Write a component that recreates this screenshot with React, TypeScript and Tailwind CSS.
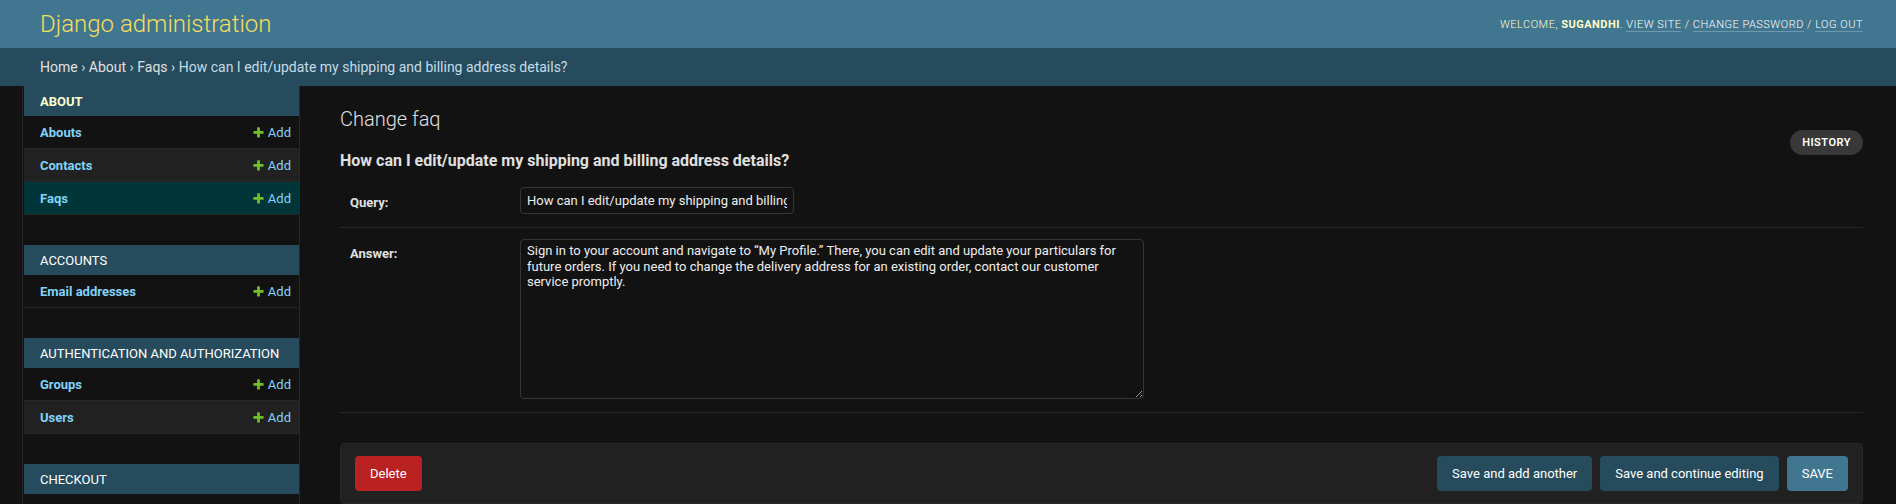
import React from 'react';

const AddIcon = () => (
  <svg width="13" height="13" viewBox="0 0 1792 1792" className="shrink-0">
    <path
      fill="#70bf2b"
      d="M1600 796v192q0 40-28 68t-68 28h-416v416q0 40-28 68t-68 28h-192q-40 0-68-28t-28-68v-416h-416q-40 0-68-28t-28-68v-192q0-40 28-68t68-28h416v-416q0-40 28-68t68-28h192q40 0 68 28t28 68v416h416q40 0 68 28t28 68z"
    />
  </svg>
);

interface ModelRow {
  name: string;
  bg: string;
}

interface AppModule {
  title: string;
  current?: boolean;
  rows: ModelRow[];
}

const modules: AppModule[] = [
  {
    title: 'About',
    current: true,
    rows: [
      { name: 'Abouts', bg: 'bg-[#121212]' },
      { name: 'Contacts', bg: 'bg-[#212121]' },
      { name: 'Faqs', bg: 'bg-[#00363a]' },
    ],
  },
  { title: 'Accounts', rows: [{ name: 'Email addresses', bg: 'bg-[#121212]' }] },
  {
    title: 'Authentication and Authorization',
    rows: [
      { name: 'Groups', bg: 'bg-[#121212]' },
      { name: 'Users', bg: 'bg-[#212121]' },
    ],
  },
  // rows below the fold are not visible
  { title: 'Checkout', rows: [] },
];

const answer =
  'Sign in to your account and navigate to \u201cMy Profile.\u201d There, you can edit and update your particulars for future orders. If you need to change the delivery address for an existing order, contact our customer service promptly.';

export default function App() {
  return (
    <div className="min-h-screen bg-[#121212] text-[#eeeeee] [font-family:Roboto,sans-serif] text-[14px] leading-[normal]">
      {/* Header */}
      <div className="h-[48px] bg-[#417690] flex items-center justify-between pl-[40px] pr-[33px]">
        <div className="text-[24px] font-light text-[#f5dd5d] leading-[28px]">Django administration</div>
        <div className="text-[11px] font-light uppercase tracking-[0.5px] text-[#ffffcc]">
          Welcome, <strong className="font-bold">Sugandhi</strong>.{' '}
          <a className="text-white border-b border-white/25">View site</a> /{' '}
          <a className="text-white border-b border-white/25">Change password</a> /{' '}
          <a className="text-white border-b border-white/25">Log out</a>
        </div>
      </div>

      {/* Breadcrumbs */}
      <div className="h-[38px] bg-[#264b5d] flex items-center px-[40px] text-[#c4dce8] whitespace-pre">
        <a className="text-[#e0e0e0]">Home</a>
        {' › '}
        <a className="text-[#e0e0e0]">About</a>
        {' › '}
        <a className="text-[#e0e0e0]">Faqs</a>
        {' › '}
        <span>How can I edit/update my shipping and billing address details?</span>
      </div>

      <div className="flex">
        {/* sidebar toggle strip */}
        <div className="w-[23px] shrink-0 border-r border-[#272727]" />

        {/* Nav sidebar */}
        <div className="w-[277px] shrink-0 pl-px border-r border-[#272727] h-[418px] overflow-hidden">
          {modules.map((m) => (
            <div key={m.title} className="mb-[30px]">
              <div
                className={`h-[30px] bg-[#264b5d] flex items-center pl-[16px] text-[13px] uppercase ${
                  m.current ? 'font-bold text-[#ffffcc]' : 'text-white'
                }`}
              >
                {m.title}
              </div>
              {m.rows.map((r) => (
                <div
                  key={r.name}
                  className={`h-[33px] ${r.bg} border-b border-[#272727] flex items-center justify-between pl-[16px] pr-[8px] text-[13px]`}
                >
                  <a className="font-bold text-[#81d4fa]">{r.name}</a>
                  <a className="flex items-center gap-[3px] text-[#81d4fa]">
                    <AddIcon />
                    Add
                  </a>
                </div>
              ))}
            </div>
          ))}
        </div>

        {/* Content */}
        <div className="flex-1 min-w-0 pl-[40px] pr-[33px] pt-[21px]">
          <div className="flex justify-between items-start">
            <div>
              <h1 className="text-[20px] font-light leading-[24px] text-[#e0e0e0] mb-[20px]">Change faq</h1>
              <h2 className="text-[16px] font-bold leading-[19px] text-[#e0e0e0] mb-[7px]">
                How can I edit/update my shipping and billing address details?
              </h2>
            </div>
            <a className="mt-[23px] h-[25px] px-[12px] flex items-center rounded-full bg-[#383838] text-[11px] font-semibold uppercase tracking-[0.5px] text-white">
              History
            </a>
          </div>

          {/* Form */}
          <div className="text-[13px]">
            <div className="h-[51px] px-[10px] pt-[10px] border-b border-[#272727] flex items-start">
              <label className="w-[170px] shrink-0 pt-[8px] font-bold text-[#e0e0e0]">Query:</label>
              <input
                readOnly
                value="How can I edit/update my shipping and billing address details?"
                className="w-[274px] h-[27px] px-[6px] bg-[#121212] border border-[#353535] rounded-[4px] text-[13px] text-[#eeeeee] outline-none"
              />
            </div>
            <div className="h-[185px] px-[10px] pt-[11px] border-b border-[#272727] flex items-start">
              <label className="w-[170px] shrink-0 pt-[7px] font-bold text-[#e0e0e0]">Answer:</label>
              <textarea
                readOnly
                value={answer}
                className="w-[624px] h-[160px] px-[6px] pt-[3px] bg-[#121212] border border-[#353535] rounded-[4px] text-[13px] leading-[1.2] text-[#eeeeee] outline-none"
              />
            </div>
          </div>

          {/* Submit row */}
          <div className="mt-[30px] bg-[#212121] border border-[#272727] rounded-[4px] px-[14px] py-[12px] flex gap-[8px] text-[13px]">
            <a className="mr-auto h-[35px] px-[15px] flex items-center rounded-[4px] bg-[#ba2121] text-white">Delete</a>
            <button className="h-[35px] px-[15px] rounded-[4px] bg-[#264b5d] text-white">Save and add another</button>
            <button className="h-[35px] px-[15px] rounded-[4px] bg-[#264b5d] text-white">Save and continue editing</button>
            <button className="h-[35px] px-[15px] rounded-[4px] bg-[#417690] text-white">SAVE</button>
          </div>
        </div>
      </div>
    </div>
  );
}
